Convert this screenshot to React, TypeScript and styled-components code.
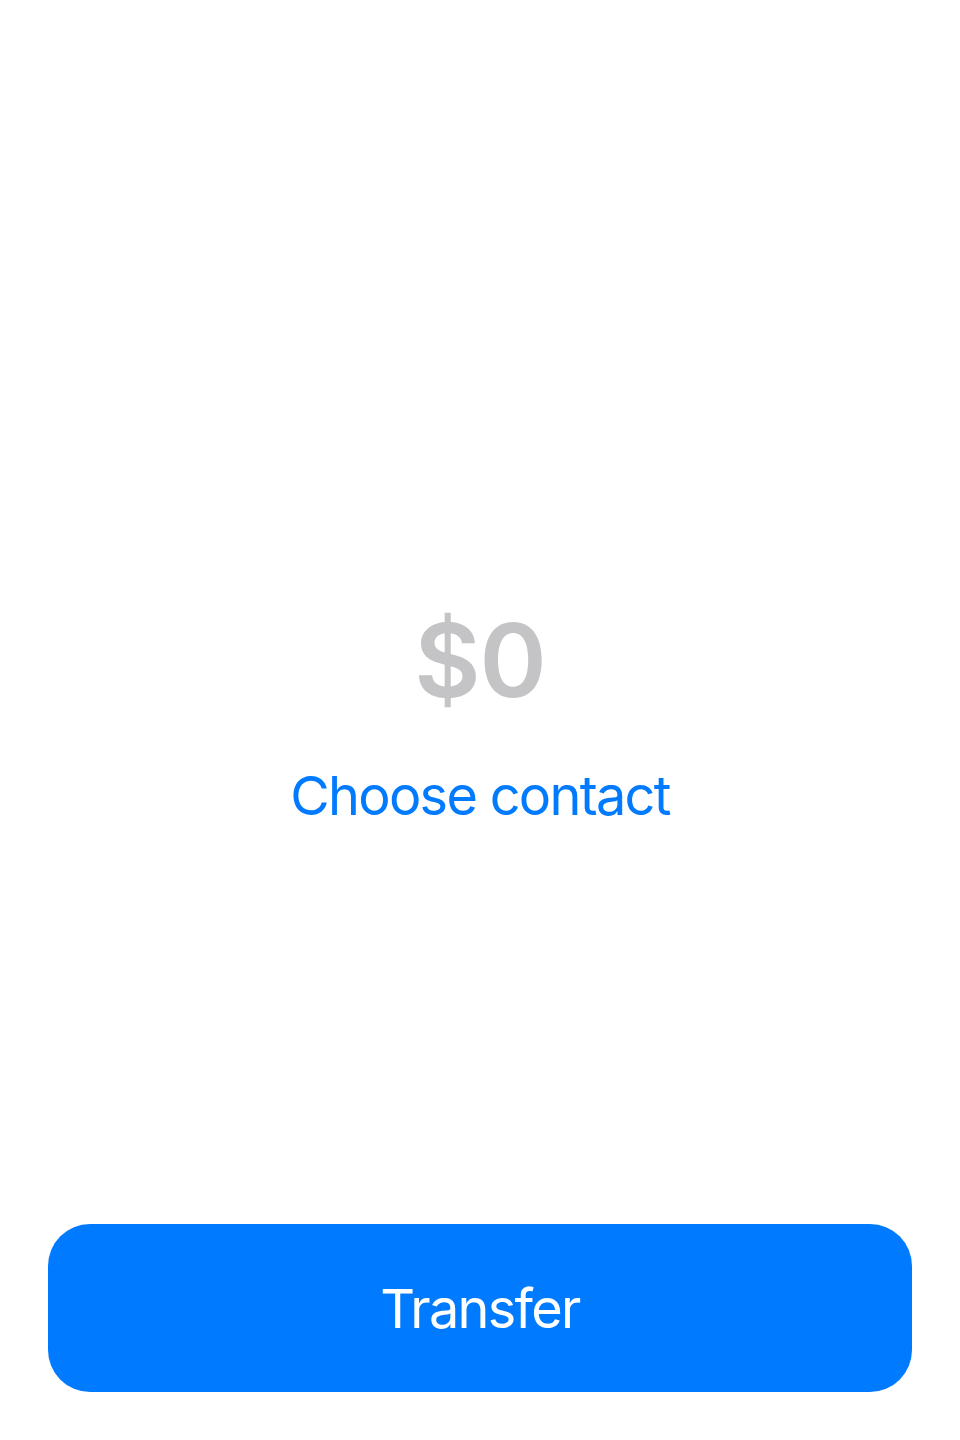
import React from "react";
import styled, { createGlobalStyle } from "styled-components";

const Global = createGlobalStyle`
  html, body { margin: 0; padding: 0; background: #ffffff; }
  body { font-family: Inter, "Noto Sans", "Liberation Sans", sans-serif; -webkit-font-smoothing: antialiased; }
`;

const Screen = styled.div`
  height: 1440px;
  display: flex;
  flex-direction: column;
  padding: 0 48px 48px;
  box-sizing: border-box;
`;

const Center = styled.main`
  flex: 1;
  display: flex;
  flex-direction: column;
  align-items: center;
  padding-top: 600px;
`;

const Amount = styled.div`
  font-size: 102px;
  font-weight: 600;
  color: #c4c4c6;
  line-height: 120px;
  letter-spacing: -1px;
`;

const ContactLink = styled.button`
  margin-top: 44px;
  background: none;
  border: none;
  padding: 0;
  font-family: inherit;
  font-size: 54px;
  line-height: 64px;
  letter-spacing: -1.7px;
  color: #007aff;
  cursor: pointer;
`;

const PrimaryButton = styled.button`
  height: 168px;
  width: 100%;
  border: none;
  border-radius: 42px;
  background: #007aff;
  color: #ffffff;
  font-family: inherit;
  font-size: 54px;
  font-weight: 400;
  letter-spacing: -1.7px;
  cursor: pointer;
`;

export default function App() {
  return (
    <>
      <Global />
      <Screen>
        <Center>
          <Amount>$0</Amount>
          <ContactLink>Choose contact</ContactLink>
        </Center>
        <PrimaryButton>Transfer</PrimaryButton>
      </Screen>
    </>
  );
}
